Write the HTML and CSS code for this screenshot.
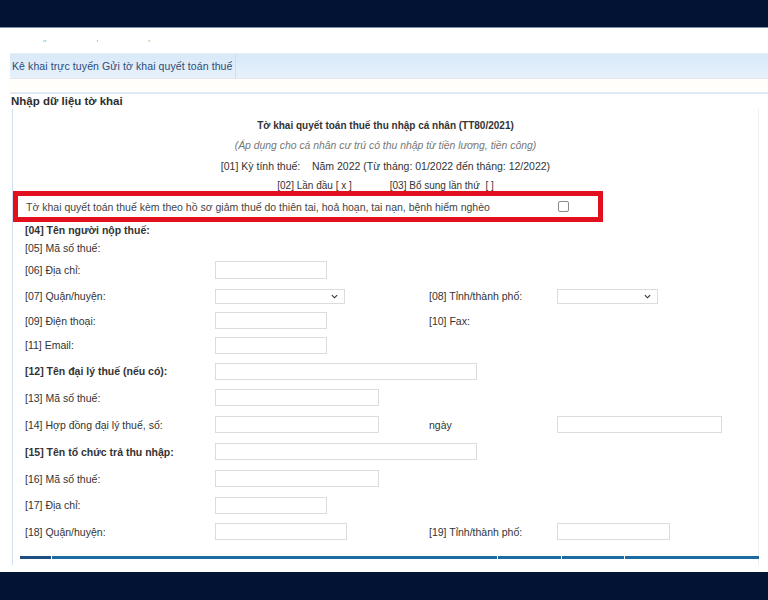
FILE: index.html
```html
<!DOCTYPE html>
<html lang="vi">
<head>
<meta charset="utf-8">
<title>Nhập dữ liệu tờ khai</title>
<link rel="stylesheet" href="styles.css">
</head>
<body>
<div class="topbar"></div>
<div class="main">
  <div class="faint"><span>''</span><span>'</span><span>'</span></div>
  <div class="tabbar"><span class="tabtext">Kê khai trực tuyến Gửi tờ khai quyết toán thuế</span></div>
  <div class="strip"></div>
  <div class="heading">Nhập dữ liệu tờ khai</div>
  <div class="panel">
    <div class="head">
      <div class="title">Tờ khai quyết toán thuế thu nhập cá nhân (TT80/2021)</div>
      <div class="sub">(Áp dụng cho cá nhân cư trú có thu nhập từ tiền lương, tiền công)</div>
      <div class="l3">[01] Kỳ tính thuế:&nbsp;&nbsp;&nbsp; Năm 2022 (Từ tháng: 01/2022 đến tháng: 12/2022)</div>
      <div class="l4">[02] Lần đầu [ x ]<span class="gap"></span>[03] Bổ sung lần thứ&nbsp; [ ]</div>
    </div>
    <div class="redbox">
      <span class="redtext">Tờ khai quyết toán thuế kèm theo hồ sơ giảm thuế do thiên tai, hoả hoạn, tai nạn, bệnh hiểm nghèo</span>
      <span class="check"></span>
    </div>
    <div class="rows">
      <div class="row h16"><span class="lab b">[04] Tên người nộp thuế:</span></div>
      <div class="row h19"><span class="lab">[05] Mã số thuế:</span></div>
      <div class="row h26"><span class="lab">[06] Địa chỉ:</span><span class="inp w112 tall"></span></div>
      <div class="row h26"><span class="lab">[07] Quận/huyện:</span><span class="cell"><span class="sel w130"><svg class="chev" viewBox="0 0 8 5" width="7" height="5"><path d="M1 1l3 3 3-3" fill="none" stroke="#333" stroke-width="1.3"/></svg></span></span><span class="lab2">[08] Tỉnh/thành phố:</span><span class="sel w101"><svg class="chev" viewBox="0 0 8 5" width="7" height="5"><path d="M1 1l3 3 3-3" fill="none" stroke="#333" stroke-width="1.3"/></svg></span></div>
      <div class="row h23"><span class="lab">[09] Điện thoại:</span><span class="cell"><span class="inp w112"></span></span><span class="lab2">[10] Fax:</span></div>
      <div class="row h26"><span class="lab">[11] Email:</span><span class="inp w112"></span></div>
      <div class="row h26"><span class="lab b">[12] Tên đại lý thuế (nếu có):</span><span class="inp w262"></span></div>
      <div class="row h27"><span class="lab">[13] Mã số thuế:</span><span class="inp w164"></span></div>
      <div class="row h27"><span class="lab">[14] Hợp đồng đại lý thuế, số:</span><span class="cell"><span class="inp w164"></span></span><span class="lab2">ngày</span><span class="inp w165"></span></div>
      <div class="row h27"><span class="lab b">[15] Tên tổ chức trả thu nhập:</span><span class="inp w262"></span></div>
      <div class="row h27"><span class="lab">[16] Mã số thuế:</span><span class="inp w164"></span></div>
      <div class="row h26"><span class="lab">[17] Địa chỉ:</span><span class="inp w112"></span></div>
      <div class="row h27"><span class="lab">[18] Quận/huyện:</span><span class="cell"><span class="inp w132"></span></span><span class="lab2">[19] Tỉnh/thành phố:</span><span class="inp w113"></span></div>
    </div>
    <div class="tline">
      <span class="seg s1"></span><span class="seg s2"></span><span class="seg s3"></span><span class="seg s4"></span><span class="seg s5"></span>
    </div>
  </div>
</div>
<div class="bottombar"></div>
</body>
</html>
```

FILE: styles.css
```css
html, body {
  margin: 0;
  padding: 0;
  background: #ffffff;
}
body {
  width: 768px;
  height: 600px;
  overflow: hidden;
  font-family: "Liberation Sans", Arial, sans-serif;
  color: #333;
}
.topbar, .bottombar {
  height: 28px;
  background: #021333;
}
.topbar {
  border-bottom: 1px solid #7f8ea6;
  height: 27px;
}
.main {
  height: 544px;
  background: #fff;
  overflow: hidden;
}
.faint {
  height: 25px;
  display: flex;
  align-items: flex-end;
  font-size: 9px;
  color: #a8a8a8;
  line-height: 10px;
  padding-left: 43px;
  gap: 50px;
  box-sizing: border-box;
  padding-bottom: 5px;
}
.tabbar {
  margin-left: 10px;
  height: 24px;
  background: linear-gradient(#d9e9f8, #e6f1fc);
  border-top: 1px solid #e4eef8;
  display: flex;
  align-items: center;
}
.tabtext {
  font-size: 10.5px;
  color: #2c4a78;
  padding: 0 2px 0 2px;
  height: 24px;
  line-height: 24px;
  border-right: 1px solid #cfdeee;
  letter-spacing: 0.1px;
}
.strip {
  margin-left: 10px;
  height: 13px;
  background: #fffefa;
  border-top: 1px solid #e8e4ec;
  border-bottom: 2px solid #dde9f5;
}
.heading {
  margin-left: 11px;
  font-weight: bold;
  font-size: 11.5px;
  color: #2e2e2e;
  height: 15px;
  line-height: 15px;
}
.panel {
  margin-left: 12px;
  width: 747px;
  height: 456px;
  border-left: 1px solid #cfe0f0;
  border-right: 1px solid #eeeeee;
  box-sizing: border-box;
  position: relative;
}
.head {
  padding-top: 7px;
  text-align: center;
  font-size: 10px;
  line-height: 20px;
  color: #333;
}
.title {
  font-weight: bold;
}
.sub {
  font-style: italic;
  color: #777;
  font-size: 10.4px;
}
.l3 {
  font-size: 10.5px;
}
.l4 {
  height: 15px;
  line-height: 20px;
}
.gap {
  display: inline-block;
  width: 38px;
}
.redbox {
  width: 590px;
  height: 31px;
  border: 5px solid #e2101e;
  box-sizing: border-box;
  display: flex;
  align-items: center;
  background: #fff;
  position: relative;
}
.redtext {
  font-size: 10.5px;
  color: #444;
  padding-left: 8px;
  width: 532px;
  flex: none;
}
.check {
  width: 9px;
  height: 9px;
  border: 1px solid #8a8a8a;
  border-radius: 2px;
  background: #fff;
}
.rows {
  padding-left: 12px;
}
.row {
  display: flex;
  align-items: center;
  font-size: 10.5px;
  color: #333;
}
.h16 { height: 16px; }
.h19 { height: 19px; }
.h23 { height: 23px; }
.h26 { height: 26px; }
.h27 { height: 27px; }
.lab {
  width: 190px;
  flex: none;
}
.lab.b {
  font-weight: bold;
}
.cell {
  width: 214px;
  flex: none;
  display: flex;
}
.lab2 {
  width: 128px;
  flex: none;
}
.inp, .sel {
  display: block;
  height: 17px;
  border: 1px solid #dcdcdc;
  box-sizing: border-box;
  background: #fff;
  flex: none;
}
.inp.tall { height: 18px; }
.sel {
  height: 15px;
  position: relative;
}
.chev {
  position: absolute;
  right: 6px;
  top: 4px;
}
.w101 { width: 101px; }
.w112 { width: 112px; }
.w113 { width: 113px; }
.w130 { width: 130px; }
.w132 { width: 132px; }
.w164 { width: 164px; }
.w165 { width: 165px; }
.w262 { width: 262px; }
.tline {
  margin-top: 11px;
  margin-left: 7px;
  width: 739px;
  height: 3px;
  display: flex;
  gap: 1px;
}
.seg {
  height: 3px;
  background: #1c6aa2;
}
.s1 { width: 31px; background: #214e82; }
.s2 { width: 445px; }
.s3 { width: 63px; }
.s4 { width: 62px; }
.s5 { flex: 1; }
```
